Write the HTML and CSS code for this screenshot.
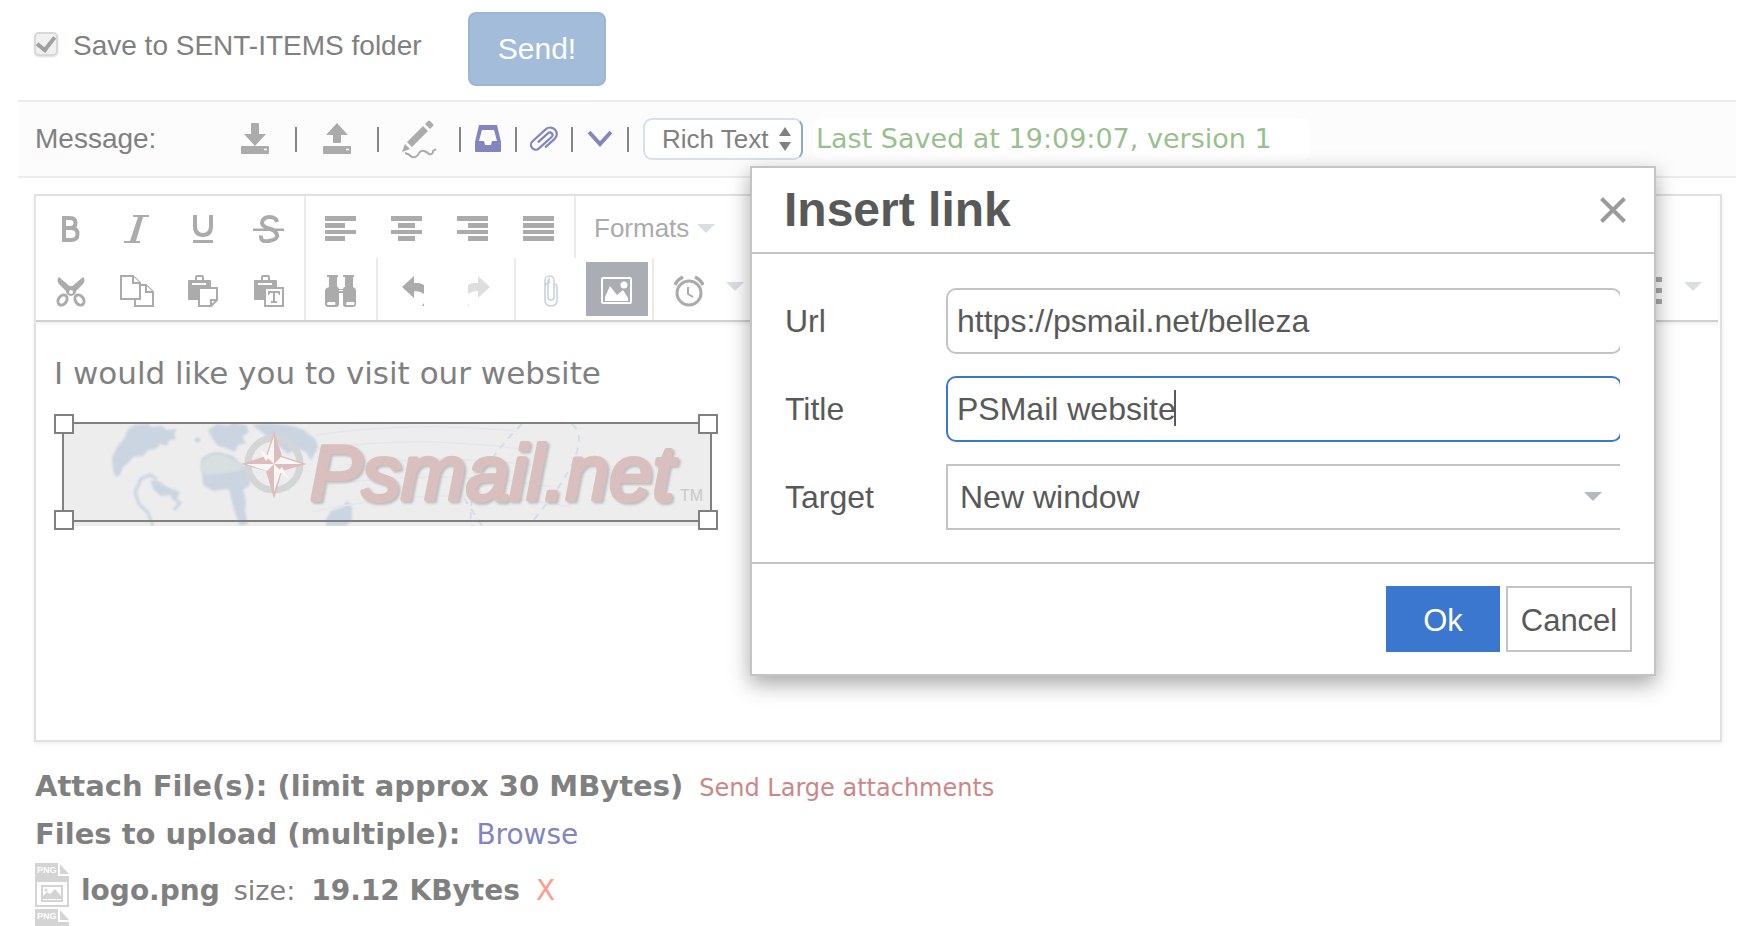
FILE: index.html
```html
<!DOCTYPE html>
<html lang="en">
<head>
<meta charset="utf-8">
<title>Compose message</title>
<link rel="stylesheet" href="styles.css">
</head>
<body>
<main class="page">
  <form class="send-row">
    <input class="tick" type="checkbox" id="save-sent" checked>
    <label class="send-label" for="save-sent">Save to SENT-ITEMS folder</label>
    <button class="send" type="button">Send!</button>
  </form>

  <section class="message-bar">
    <span class="message-label">Message:</span>
    <button class="bar-icon wide" type="button" aria-label="Download draft"><svg width="30" height="34" viewBox="0 0 30 34"><path fill="#ababab" d="M12 1h6q1 0 1 1v10h7L15 24 4 12h7V2q0-1 1-1zM2 24h26q1 0 1 1v6q0 1-1 1H2q-1 0-1-1v-6q0-1 1-1z"/><path stroke="#fff" stroke-width="1.500" d="M24 27.500h3"/></svg></button>
    <span class="pipe"></span>
    <button class="bar-icon wide" type="button" aria-label="Upload draft"><svg width="30" height="34" viewBox="0 0 30 34"><path fill="#ababab" d="M11 20v-7H4L15 1l11 12h-7v7q0 1-1 1h-6q-1 0-1-1zM2 24h26q1 0 1 1v6q0 1-1 1H2q-1 0-1-1v-6q0-1 1-1z"/><path stroke="#fff" stroke-width="1.500" d="M24 27.500h3"/></svg></button>
    <span class="pipe"></span>
    <button class="bar-icon wide" type="button" aria-label="Signature"><svg width="36" height="38" viewBox="0 0 36 38"><path fill="#ababab" d="M22 6l5 5L11 27l-5-5zM24 4l3-3q1-1 2 0l3 3q1 1 0 2l-3 3zM4 24l5 5-8 3z"/><path fill="none" stroke="#ababab" stroke-width="2" d="M4 33q4 1 7 4 5 1 7-4 2-3 5-2t5 3q4 1 4-3l3-2"/></svg></button>
    <span class="pipe"></span>
    <button class="bar-icon slim" type="button" aria-label="Inbox"><svg width="26" height="28" viewBox="0 0 26 28"><path fill="#8285bf" fill-rule="evenodd" d="M4 0h18l4 17v9q0 1-1 1H1q-1 0-1-1v-9zM7 5L4 16h5l1 4h6l1-4h5L19 5z"/></svg></button>
    <span class="pipe"></span>
    <button class="bar-icon slim" type="button" aria-label="Attach"><svg width="30" height="28" viewBox="-15 -14 30 28"><path transform="rotate(-42)" fill="none" stroke="#8285bf" stroke-width="2.200" stroke-linecap="round" d="M-4 7H8a6.500 6.500 0 0 0 0-13H-10a4.800 4.800 0 0 0 0 9.600H7a2.600 2.600 0 0 0 0-5.200H-6"/></svg></button>
    <span class="pipe"></span>
    <button class="bar-icon slim" type="button" aria-label="More"><svg width="24" height="18" viewBox="0 0 24 18"><path fill="none" stroke="#8285bf" stroke-width="4" d="M1 2l11 12L23 2"/></svg></button>
    <span class="pipe"></span>
    <span class="mode">
      <select class="mode-select" aria-label="Editor mode"><option>Rich Text</option></select>
      <svg class="mode-arrows" width="12" height="24" viewBox="0 0 12 24"><path fill="#808080" d="M6 0l6 9H0zM6 24l6-9H0z"/></svg>
    </span>
    <span class="saved">Last Saved at 19:09:07, version 1</span>
  </section>

  <section class="editor">
    <div class="toolbar">
      <div class="tool-row">
        <div class="group">
          <button class="tool" type="button" aria-label="Bold"><svg width="20" height="28" viewBox="0 0 20 28"><path fill="none" stroke="#ababab" stroke-width="4" d="M3 3h6q5.500 0 5.500 5T9 13H3h7q6.500 0 6.500 6T10 25H3zV27"/></svg></button>
          <button class="tool" type="button" aria-label="Italic"><svg width="26" height="28" viewBox="0 0 26 28"><path fill="#ababab" d="M9 0h16v2h-6L12 26h4v2H0v-2h6L14 2H9z"/></svg></button>
          <button class="tool" type="button" aria-label="Underline"><svg width="22" height="28" viewBox="0 0 22 28"><path fill="none" stroke="#ababab" stroke-width="4" d="M3 0v11q0 9 8 9t8-9V0"/><path fill="#ababab" d="M1 25h20v3H1z"/></svg></button>
          <button class="tool" type="button" aria-label="Strikethrough"><svg width="32" height="28" viewBox="0 0 32 28"><path fill="none" stroke="#ababab" stroke-width="4" d="M24 7q-1-5-7.500-5T9 7.500q0 4 7 6t8 6.500-8 6-8-5.500"/><path fill="#ababab" d="M0 13.500h31v2.500H0z"/></svg></button>
        </div>
        <div class="group">
          <button class="tool" type="button" aria-label="Align left"><svg width="32" height="26" viewBox="0 0 32 26"><path fill="#ababab" d="M0 0h31v5H0zM0 7h20v5H0zM0 14h31v4H0zM0 20h20v5H0z"/></svg></button>
          <button class="tool" type="button" aria-label="Align center"><svg width="32" height="26" viewBox="0 0 32 26"><path fill="#ababab" d="M0 0h31v5H0zM7 7h17v5H7zM0 14h31v4H0zM7 20h17v5H7z"/></svg></button>
          <button class="tool" type="button" aria-label="Align right"><svg width="32" height="26" viewBox="0 0 32 26"><path fill="#ababab" d="M0 0h31v5H0zM11 7h20v5H11zM0 14h31v4H0zM11 20h20v5H11z"/></svg></button>
          <button class="tool" type="button" aria-label="Justify"><svg width="32" height="26" viewBox="0 0 32 26"><path fill="#ababab" d="M0 0h31v5H0zM0 7h31v5H0zM0 14h31v4H0zM0 20h31v5H0z"/></svg></button>
        </div>
        <div class="group">
          <button class="formats" type="button">Formats <span class="caret"></span></button>
        </div>
      </div>
      <div class="tool-row">
        <div class="group">
          <button class="tool" type="button" aria-label="Cut"><svg width="30" height="32" viewBox="0 0 30 32"><path fill="#ababab" d="M3 2q-3 3 0 7l9 9 5-4zM27 2q3 3 0 7l-9 9-5-4z"/><circle cx="15" cy="16" r="5" fill="#ababab"/><circle cx="15" cy="17" r="2" fill="#fff"/><g fill="none" stroke="#ababab" stroke-width="3"><ellipse cx="6.500" cy="25" rx="4" ry="5.500" transform="rotate(35 6.500 25)"/><ellipse cx="23.500" cy="25" rx="4" ry="5.500" transform="rotate(-35 23.500 25)"/></g></svg></button>
          <button class="tool" type="button" aria-label="Copy"><svg width="34" height="32" viewBox="0 0 34 32"><g fill="#fff" stroke="#ababab" stroke-width="2"><path d="M15 10h11l7 7v14H15z"/><path d="M26 10v7h7"/><path d="M1 1h12l7 7v16H1z"/><path d="M13 1v7h7"/></g></svg></button>
          <button class="tool" type="button" aria-label="Paste"><svg width="30" height="32" viewBox="0 0 30 32"><path fill="#ababab" d="M1 5h6V2q0-2 2-2h5q2 0 2 2v3h6q1 0 1 1v6H10v13H1q-1 0-1-1V6q0-1 1-1z"/><path fill="#fff" d="M9 2h5v3H9zM4 8h14v2H4z"/><path fill="#fff" stroke="#ababab" stroke-width="2" d="M11 13h18v12l-6 6H11zM29 25h-6v6"/></svg></button>
          <button class="tool" type="button" aria-label="Paste as text"><svg width="30" height="32" viewBox="0 0 30 32"><path fill="#ababab" d="M1 5h6V2q0-2 2-2h5q2 0 2 2v3h6q1 0 1 1v6H10v13H1q-1 0-1-1V6q0-1 1-1z"/><path fill="#fff" d="M9 2h5v3H9zM4 8h14v2H4z"/><path fill="#fff" stroke="#ababab" stroke-width="2" d="M11 13h18v18H11z"/><path fill="#ababab" d="M14 16h12v4h-1l-1-2h-3v8h2v2h-6v-2h2v-8h-3l-1 2h-1z"/></svg></button>
        </div>
        <div class="group">
          <button class="tool" type="button" aria-label="Find and replace"><svg width="32" height="32" viewBox="0 0 32 32"><path fill="#ababab" d="M2 0h11v2h-1v10h1l1 2h4l1-2h1V2h-2V0h11v2h-1v10q3 1 3 4v13q0 3-3 3h-8q-2 0-2-3V18h-4v11q0 3-3 3H3q-3 0-3-3V16q0-3 4-4V2H2z"/><path fill="#fff" d="M3 27h7q1 1.500 0 3H3q-2-1 0-3zM22 27h7q1 1.500 0 3h-7q-2-1 0-3zM14 15h4v1h-4z"/></svg></button>
        </div>
        <div class="group">
          <button class="tool" type="button" aria-label="Undo"><svg width="22" height="32" viewBox="0 0 22 32"><path fill="#ababab" d="M0 12L12 1v7h3q4 0 7 2v9q-4-3-10-3v7zM20 31l2-3v3z"/></svg></button>
          <button class="tool" type="button" aria-label="Redo"><svg width="22" height="32" viewBox="0 0 22 32"><path fill="#dedede" d="M22 12L10 1v7H7q-4 0-7 2v9q4-3 10-3v7zM0 28l1 3H0z"/></svg></button>
        </div>
        <div class="group">
          <button class="tool" type="button" aria-label="Insert link"><svg width="14" height="32" viewBox="0 0 14 32"><path fill="none" stroke="#cbd3dc" stroke-width="1.600" d="M10 8v14q0 3-3 3t-3-3V6q0-1 1-2V8q-4 0-4 4v13q0 6 6 6t6-6V12q0-3-3-3M1 12V6q0-5 4.500-5T10 6v5"/></svg></button>
          <button class="tool picked" type="button" aria-label="Insert image"><svg width="32" height="28" viewBox="0 0 32 28"><rect x="1" y="1" width="29" height="25" rx="1" fill="none" stroke="#fff" stroke-width="2"/><circle cx="23" cy="8" r="3.500" fill="#fff"/><path fill="#fff" d="M4 24V20l5-11 7 9 6-5 5 8v3z"/></svg></button>
        </div>
        <div class="group">
          <button class="tool" type="button" aria-label="Insert time"><svg width="30" height="32" viewBox="0 0 30 32"><circle cx="15" cy="18" r="12" fill="none" stroke="#ababab" stroke-width="3"/><path fill="none" stroke="#ababab" stroke-width="3.500" d="M1 10q2-5 8-8M29 10q-2-5-8-8"/><path fill="none" stroke="#ababab" stroke-width="2" d="M14 12v7l5 3"/></svg></button>
          <button class="drop" type="button" aria-label="Time formats"><span class="caret"></span></button>
        </div>
        <div class="group last">
          <button class="tool list" type="button" aria-label="List"><svg width="30" height="28" viewBox="0 0 30 28"><path fill="#ababab" d="M0 0h30v5H0zM0 11h30v5H0zM0 22h30v5H0z"/></svg></button>
          <button class="drop" type="button" aria-label="List styles"><span class="caret"></span></button>
        </div>
      </div>
    </div>
    <div class="content">
      <p class="para">I would like you to visit our website</p>
      <div class="picture">
        <svg class="logo" viewBox="0 0 650 104" preserveAspectRatio="none" role="img" aria-label="Psmail.net">
          <rect width="650" height="104" fill="#ededed"/>
          <g class="map" fill="#cbd4e1">
            <path d="M72 3l14-1 4 3 10-1 5 4 10-1-3 5 2 5-7 1-2 6-7-2-4 5-8 1-5 6-10 1-5 6-5 4-3 8-4 2-3-6-1-14 5-10 7-8 4-10z"/>
            <path d="M88 58l8 1 9 6 13 5-4 8-6-5-9 1-7-6z"/>
            <path d="M146 8l9-6 10 2 6-3 13 2 3 7-7 5 4 6-8 2-3 7-9-4-8-2-6-8zM133 16h5v4h-5z"/>
            <path d="M190 3q30-4 52 5l12 10 2 8-7 12-5-8-10-4-8 6-16-14z"/>
            <path d="M139 38q6-8 18-8l14 4 12 12 6-1-1 18-9 6-14-2-14 2-10-6z"/>
            <path d="M167 67l14-1 3 14-1 10 3 12-8 2-6-16zM264 97l5-8 12-4 4-7 5 8v12l-6 6h-20z"/>
          </g>
          <path class="map" fill="none" stroke="#cbd4e1" stroke-width="3" d="M73 70l6-13 9-4 7 4M73 70l4 12 9 9 5 13M110 75l8 6-6 7"/>
          <path class="map" fill="#d7dfe0" d="M142 38q8-8 22-4l14 8 2 6-17 3-20 2-5-7z"/>
          <g fill="none" stroke="#e3e7ec" stroke-width="1.500"><path d="M254 13q100-14 200-4M254 27q100-14 205 0M285 43q100-12 200 2M250 65q130-20 240 0M250 90q130-30 260-5"/></g>
          <g fill="none" stroke="#d6dde8" stroke-width="2" stroke-dasharray="7 6"><path d="M460 2q-60 60-50 102M510 2q25 20-40 98M395 65l25 39"/></g>
          <circle cx="212" cy="42" r="26" fill="none" stroke="#d3d6d7" stroke-width="7"/>
          <path fill="#dfbcbc" d="M212 9l8 25 25 8-25 7-8 28-8-28-25-7 25-8z"/>
          <path fill="#f7f7f7" d="M212 14v28l-7-7zM240 42h-28l7-7zM212 70V42l7 7zM184 42h28l-7 7zM197 27l11 8-4 4zM227 57l-11-8 4-4z"/>
          <text class="brand" x="248" y="78">Psmail.net</text>
          <text class="tm" x="618" y="79">TM</text>
        </svg>
        <span class="handle nw"></span><span class="handle ne"></span><span class="handle sw"></span><span class="handle se"></span>
      </div>
    </div>
  </section>

  <section class="attachments">
    <p class="attach-line"><strong>Attach File(s): (limit approx 30 MBytes)</strong><a class="large" href="#large">Send Large attachments</a></p>
    <p class="attach-line"><strong>Files to upload (multiple):</strong><a class="browse" href="#browse">Browse</a></p>
    <ul class="files">
      <li class="file">
        <svg class="png" width="34" height="44" viewBox="0 0 34 44"><path fill="#d4d4d4" d="M0 0h23v13h11v31H0z"/><path fill="#d4d4d4" d="M25 1l9 10h-9z"/><path fill="#fff" d="M2 19h30v23H2z"/><path fill="#d4d4d4" d="M6 22h22v17H6z"/><path fill="#fff" d="M8 24h18v13H8z"/><path fill="#d4d4d4" d="M8 36v-3l4-4 3 2 5-5 6 7v3z"/><circle cx="11" cy="27" r="1.500" fill="#d4d4d4"/><text class="png-tag" x="2" y="10">PNG</text></svg>
        <strong>logo.png</strong><span>size:</span><strong class="size">19.12 KBytes</strong><a class="remove" href="#remove">X</a>
      </li>
      <li class="file">
        <svg class="png" width="34" height="44" viewBox="0 0 34 44"><path fill="#d4d4d4" d="M0 0h23v13h11v31H0z"/><path fill="#d4d4d4" d="M25 1l9 10h-9z"/><text class="png-tag" x="2" y="10">PNG</text></svg>
      </li>
    </ul>
  </section>

  <section class="dialog" role="dialog" aria-labelledby="dialog-title">
    <header class="dialog-head">
      <h1 class="dialog-title" id="dialog-title">Insert link</h1>
      <button class="close" type="button" aria-label="Close"><svg width="26" height="26" viewBox="0 0 26 26"><path stroke="#9b9b9b" stroke-width="4" d="M1.500 1.500l23 23M24.500 1.500l-23 23"/></svg></button>
    </header>
    <div class="fields">
      <label for="url">Url</label>
      <div class="field"><input class="box" id="url" type="text" value="https://psmail.net/belleza"></div>
      <label for="title">Title</label>
      <div class="field"><input class="box active" id="title" type="text" value="PSMail website"><span class="cursor"></span></div>
      <label for="target">Target</label>
      <div class="field"><select class="box pick" id="target"><option>New window</option></select><span class="caret dark"></span></div>
    </div>
    <footer class="dialog-foot">
      <button class="ok" type="button">Ok</button>
      <button class="cancel" type="button">Cancel</button>
    </footer>
  </section>
</main>
</body>
</html>
```
FILE: styles.css
```css
* { box-sizing: border-box; }
body { margin: 0; background: #fff; color: #808080; font-family: "Liberation Sans", Arial, sans-serif; font-size: 28px; }
button, input, select { font-family: inherit; margin: 0; padding: 0; border: 0; background: none; color: inherit; }
button { display: flex; align-items: center; justify-content: center; }
svg { display: block; flex: none; }
p, h1, ul { margin: 0; padding: 0; }
a { text-decoration: none; }

.page { position: relative; height: 100vh; overflow: hidden; padding: 12px 24px 0 18px; }

.send-row { display: flex; align-items: center; height: 74px; padding-left: 16px; }
.tick { appearance: none; width: 24px; height: 24px; border: 2px solid #d8d8d8; border-radius: 5px; background: #f1f1f1; box-shadow: 0 1px 2px #ddd; display: flex; align-items: center; justify-content: center; margin-bottom: 10px; }
.tick::after { content: ""; width: 8px; height: 14px; border: solid #a0a0a0; border-width: 0 4px 4px 0; transform: rotate(38deg); margin-bottom: 4px; }
.send-label { margin: 0 30px 6px 15px; min-width: 365px; }
.send { width: 138px; height: 74px; border: 2px solid #9cb6d4; border-radius: 8px; background: #a3bcd9; color: #fff; font-size: 30px; }

.message-bar { display: flex; align-items: center; height: 78px; margin-top: 14px; padding-left: 17px; background: #fcfcfc; border: solid #ececec; border-width: 2px 0; white-space: nowrap; }
.message-label { width: 180px; }
.wide { width: 32px; margin: 0 24px; }
.slim { width: 30px; height: 30px; margin: 0 12px; }
.pipe { width: 2px; height: 25px; background: #858585; }
.mode { position: relative; margin-left: 14px; }
.mode-select { appearance: none; width: 160px; height: 42px; padding-left: 17px; border: 2px solid #d6e1eb; border-right-color: #8fa9c4; border-radius: 9px; background: #fff; font-size: 26px; }
.mode-arrows { position: absolute; right: 12px; top: 9px; }
.saved { margin-left: 10px; padding: 0 39px 0 3px; line-height: 42px; border-radius: 10px; background: #fff; color: #9abf8e; font-family: "DejaVu Sans", Verdana, sans-serif; font-size: 27px; }

.editor { margin: 16px 14px 0 16px; height: 548px; border: 2px solid #e0e0e0; box-shadow: 0 2px 4px #eee; }
.toolbar { margin-right: 2px; border-bottom: 2px solid #d0d0d0; box-shadow: 0 2px 3px #f0f0f0; }
.tool-row { display: flex; height: 62px; }
.group { display: flex; align-items: center; padding: 0 2px; border-right: 2px solid #ebebeb; }
.group:last-child { border-right: 0; }
.tool { width: 66px; height: 54px; padding-top: 3px; }
.picked { width: 62px; margin: 0 2px; background: #aaaeb4; }
.formats { gap: 8px; padding: 3px 16px 0; color: #ababab; font-size: 26px; }
.caret { width: 0; height: 0; border: solid transparent; border-width: 9px 9px 0; border-top-color: #dadee2; }
.drop { width: 26px; height: 54px; padding-bottom: 5px; }
.last { margin-left: auto; padding-right: 12px; }
.list { width: 46px; margin-right: 10px; }

.content { padding: 31px 18px; }
.para { font-family: "DejaVu Sans", Verdana, sans-serif; font-size: 31px; line-height: 40px; }
.picture { position: relative; width: 650px; height: 104px; margin: 29px 0 0 8px; }
.picture::after { content: ""; position: absolute; inset: 0 0 4px 0; border: 2px solid #808080; }
.logo { width: 100%; height: 100%; }
.map { filter: blur(1px); }
.brand { font: italic 78px "Liberation Sans", Arial, sans-serif; fill: #dabfbf; stroke: #dabfbf; stroke-width: 4px; stroke-linejoin: round; filter: drop-shadow(2px 2px 1px #bdbdbd); }
.tm { font: 16px "Liberation Sans", Arial, sans-serif; fill: #c8c8c8; }
.handle { position: absolute; z-index: 1; width: 20px; height: 20px; border: 2px solid #808080; background: #fff; }
.nw { left: -8px; top: -8px; }
.ne { right: -6px; top: -8px; }
.sw { left: -8px; bottom: -4px; }
.se { right: -6px; bottom: -4px; }

.attachments { padding: 21px 17px 0; font-family: "DejaVu Sans", Verdana, sans-serif; }
.attach-line { display: flex; align-items: baseline; gap: 16px; font-size: 29px; line-height: 46px; white-space: nowrap; }
.large { color: #cb8787; font-size: 24px; }
.browse { color: #8285bf; font-size: 28px; }
.files { list-style: none; padding-top: 5px; }
.file { display: flex; height: 46px; line-height: 56px; white-space: nowrap; }
.png { margin-right: 12px; }
.png-tag { font: bold 9px "Liberation Sans", Arial, sans-serif; fill: #fff; }
.file span { margin-left: 14px; font-size: 27px; }
.size { margin: 0 16px; }
.remove { color: #fd9b90; }

.dialog { position: absolute; top: 166px; right: 104px; width: 906px; max-width: calc(100% - 128px); border: 2px solid #c4c4c4; background: #fff; color: #595959; font-size: 32px; box-shadow: 0 8px 20px rgba(0, 0, 0, 0.35); }
.dialog-head { display: flex; justify-content: space-between; align-items: center; height: 86px; padding: 0 28px 0 32px; border-bottom: 2px solid #c4c4c4; }
.dialog-title { font-size: 48px; line-height: 84px; }
.close { width: 26px; height: 26px; }
.fields { display: grid; grid-template-columns: 161px 1fr; row-gap: 22px; align-items: center; padding: 34px 34px 32px 33px; }
.field { position: relative; overflow: hidden; }
.box { display: block; width: calc(100% + 2px); height: 66px; padding: 0 9px; border: 2px solid #c4c4c4; border-radius: 10px; background: #fff; font-size: 32px; outline: 0; }
.active { border-color: #3c77cf; }
.pick { appearance: none; padding-left: 12px; border-radius: 0; }
.cursor { position: absolute; left: 228px; top: 14px; width: 2px; height: 36px; background: #595959; }
.dark { position: absolute; right: 18px; top: 28px; border-top-color: #b5bac0; }
.dialog-foot { display: flex; justify-content: flex-end; gap: 6px; padding: 22px; border-top: 2px solid #c4c4c4; }
.ok, .cancel { height: 66px; padding-top: 4px; font-size: 31px; }
.ok { width: 114px; background: #3c77cf; color: #fff; }
.cancel { width: 126px; border: 2px solid #c4c4c4; }
```
